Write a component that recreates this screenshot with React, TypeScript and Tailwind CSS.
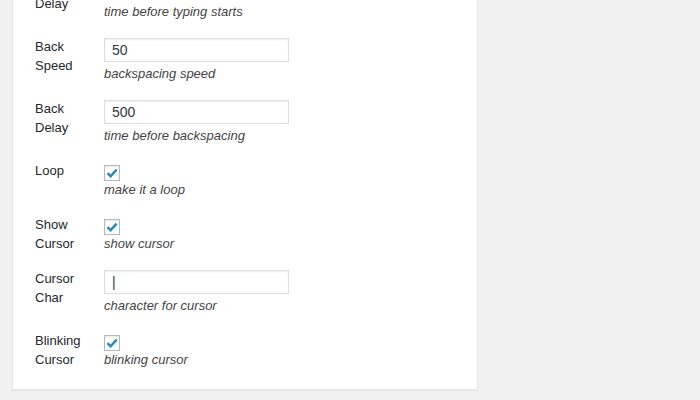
import React from 'react';

type Row =
  | { kind: 'input'; label: string[]; value: string; desc: string }
  | { kind: 'check'; label: string[]; desc: string };

const rows: Row[] = [
  { kind: 'input', label: ['Type', 'Delay'], value: '0', desc: 'time before typing starts' },
  { kind: 'input', label: ['Back', 'Speed'], value: '50', desc: 'backspacing speed' },
  { kind: 'input', label: ['Back', 'Delay'], value: '500', desc: 'time before backspacing' },
  { kind: 'check', label: ['Loop'], desc: 'make it a loop' },
  { kind: 'check', label: ['Show', 'Cursor'], desc: 'show cursor' },
  { kind: 'input', label: ['Cursor', 'Char'], value: '|', desc: 'character for cursor' },
  { kind: 'check', label: ['Blinking', 'Cursor'], desc: 'blinking cursor' },
];

const Checkbox: React.FC = () => (
  <div className="flex h-4 w-4 items-center justify-center border border-[#b4b9be] bg-white shadow-[inset_0_1px_2px_rgba(0,0,0,0.1)]">
    <svg width="14" height="14" viewBox="0 0 14 14">
      <path
        d="M2.5 7.2 L5.6 10.2 L11.6 3.6"
        fill="none"
        stroke="#1e8cbe"
        strokeWidth="2.4"
        strokeLinejoin="miter"
      />
    </svg>
  </div>
);

export default function App() {
  return (
    <div className="h-[400px] w-[700px] overflow-hidden bg-[#f1f1f1] font-['Liberation_Sans',Arial,sans-serif]">
      <div className="ml-[12px] mt-[-35px] w-[466px] border border-[#e5e5e5] bg-white pb-[3px] pl-[22px] pt-[10px] shadow-[0_1px_1px_rgba(0,0,0,0.04)]">
        {rows.map((row, i) => (
          <div key={i} className="flex pb-[17px]">
            <div className="w-[69px] -mt-px text-[13px] leading-[19px] text-[#23282d]">
              {row.label.map((l) => (
                <div key={l}>{l}</div>
              ))}
            </div>
            <div>
              {row.kind === 'input' ? (
                <div className="flex h-[24px] w-[185px] items-center border border-[#ddd] px-[7px] text-[14px] text-[#32373c] shadow-[inset_0_1px_2px_rgba(0,0,0,0.07)]">
                  {row.value}
                </div>
              ) : (
                <div className="pt-[3px]">
                  <Checkbox />
                </div>
              )}
              <div
                className={`${row.kind === 'input' ? 'mt-[2px]' : '-mt-px'} text-[13px] italic leading-[19px] text-[#444]`}
              >
                {row.desc}
              </div>
            </div>
          </div>
        ))}
      </div>
    </div>
  );
}
